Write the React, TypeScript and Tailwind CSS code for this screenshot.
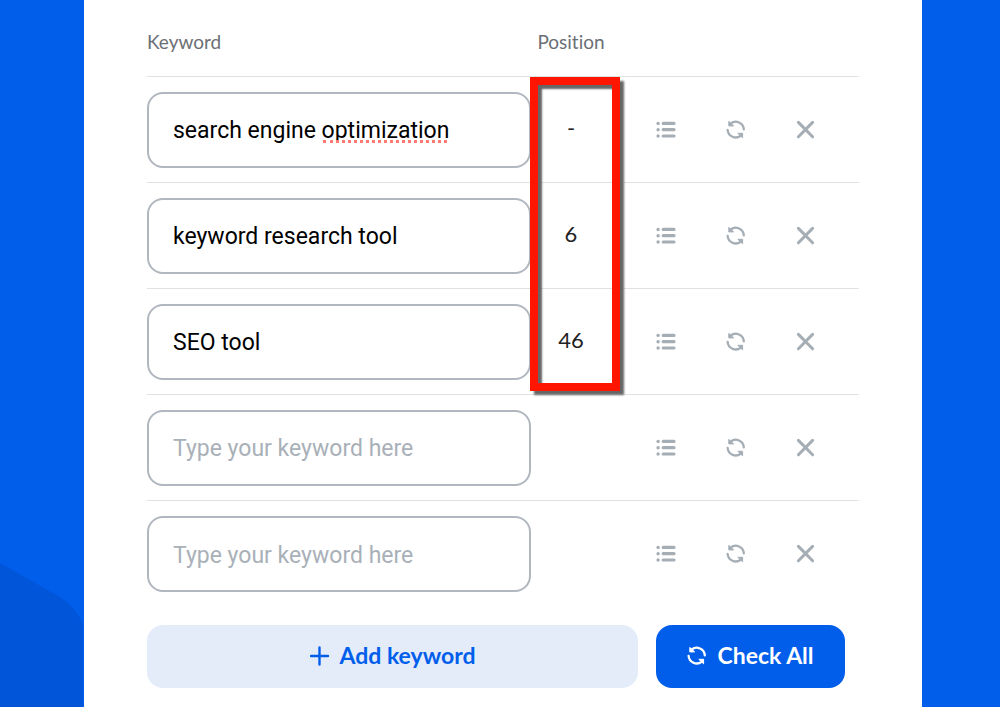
import React, { useState } from 'react';

interface KeywordRow {
  id: number;
  keyword: string;
  position: string;
  misspelled?: boolean;
}

const initialRows: KeywordRow[] = [
  { id: 1, keyword: 'search engine optimization', position: '-', misspelled: true },
  { id: 2, keyword: 'keyword research tool', position: '6' },
  { id: 3, keyword: 'SEO tool', position: '46' },
  { id: 4, keyword: '', position: '' },
  { id: 5, keyword: '', position: '' },
];

const ListIcon = () => (
  <svg className="h-5 w-5" viewBox="0 0 20 20" fill="none" aria-hidden="true">
    <g fill="currentColor">
      <circle cx="2.1" cy="3.4" r="1.7" />
      <circle cx="2.1" cy="9.7" r="1.7" />
      <circle cx="2.1" cy="16" r="1.7" />
    </g>
    <path d="M7.2 3.4H18M7.2 9.7H18M7.2 16H18" stroke="currentColor" strokeWidth="3.2" strokeLinecap="round" />
  </svg>
);

const RefreshIcon = () => (
  <svg className="h-5 w-5" viewBox="0 0 20 20" fill="none" aria-hidden="true">
    <path
      d="M17.8 9.4A8.1 8.1 0 0 0 4.6 3.6M1.6 9.8A8.1 8.1 0 0 0 14.8 15.6"
      stroke="currentColor"
      strokeWidth="2.3"
      strokeLinecap="round"
    />
    <path
      d="M2.8 1.4V5.9H7.6ZM16.6 17.8V13.3H11.8Z"
      fill="currentColor"
      stroke="currentColor"
      strokeWidth="1"
      strokeLinejoin="round"
    />
  </svg>
);

const CloseIcon = () => (
  <svg className="h-5 w-5" viewBox="0 0 20 20" fill="none" aria-hidden="true">
    <path d="M2.4 2.4L16.6 16.8M16.6 2.4L2.4 16.8" stroke="currentColor" strokeWidth="3" strokeLinecap="round" />
  </svg>
);

const PlusIcon = () => (
  <svg className="h-5 w-5" viewBox="0 0 20 20" fill="none" aria-hidden="true">
    <path d="M9.5 1.5V18.5M1 10H18" stroke="currentColor" strokeWidth="2.4" strokeLinecap="round" />
  </svg>
);

interface IconButtonProps {
  label: string;
  onClick?: () => void;
  children: React.ReactNode;
}

const IconButton: React.FC<IconButtonProps> = ({ label, onClick, children }) => (
  <button type="button" aria-label={label} onClick={onClick} className="flex h-10 w-[70px] items-center justify-center">
    {children}
  </button>
);

export default function App() {
  const [rows, setRows] = useState<KeywordRow[]>(initialRows);

  const updateKeyword = (id: number, keyword: string) => {
    setRows(rows.map(row => (row.id === id ? { ...row, keyword, misspelled: false } : row)));
  };

  const addRow = () => {
    setRows([...rows, { id: Date.now(), keyword: '', position: '' }]);
  };

  const removeRow = (id: number) => {
    setRows(rows.filter(row => row.id !== id));
  };

  return (
    <div className="flex min-h-screen bg-[#005eeb] font-['Lato','Open_Sans',sans-serif] [font-variant-ligatures:none]">
      {/* Left side with the darker blob */}
      <div className="flex w-[84px] shrink-0 flex-col justify-end">
        <svg className="block h-36 w-full" viewBox="0 0 84 144" preserveAspectRatio="none" aria-hidden="true">
          <path d="M0 0L58 33C70 40 79 50 83 63V144H0Z" fill="#0055d8" />
        </svg>
      </div>

      <main className="min-w-0 flex-1 bg-white px-[63px] pb-[19px]">
        <table className="w-full table-fixed border-separate border-spacing-0">
          <colgroup>
            <col />
            <col className="w-20" />
            <col className="w-[248px]" />
          </colgroup>
          <thead>
            <tr className="text-[19px] leading-6 text-[#6b6f76]">
              <th className="border-b border-[#dfe1e3] pt-[30px] pb-[22px] text-left font-normal">Keyword</th>
              <th className="border-b border-[#dfe1e3] pt-[30px] pb-[22px] text-center font-normal">Position</th>
              <th className="border-b border-[#dfe1e3]" aria-label="Actions" />
            </tr>
          </thead>
          <tbody className="[&>tr:not(:last-child)>td]:border-b">
            {rows.map((row, index) => (
              <tr key={row.id} className="h-[106px]">
                <td className="border-[#dfe1e3]">
                  <div className="relative">
                    <input
                      type="text"
                      aria-label={`Keyword ${index + 1}`}
                      value={row.keyword}
                      placeholder="Type your keyword here"
                      spellCheck={false}
                      onChange={e => updateKeyword(row.id, e.target.value)}
                      className="block h-[76px] w-full rounded-2xl border-2 border-[#b1b7be] bg-white px-6 pt-0.5 font-['Roboto','Liberation_Sans',sans-serif] text-[23px] text-black placeholder:text-[#a9b0b8]"
                    />
                    {row.misspelled && (
                      <span className="absolute top-12 left-44 w-[124px] border-b-3 border-dotted border-[#ff7a72]" />
                    )}
                  </div>
                </td>
                <td className="relative border-[#dfe1e3] pb-1 text-center text-[22px] text-[#222222]">
                  {row.position}
                  {index === 0 && (
                    <div className="pointer-events-none absolute top-0 -left-px z-10 h-[314px] w-[90px] border-8 border-[#ff1500] shadow-[4px_4px_2px_#666666,inset_4px_4px_2px_#666666]" />
                  )}
                </td>
                <td className="border-[#dfe1e3]">
                  <div className="flex pl-5 text-[#a5adb5]">
                    <IconButton label="Show results">
                      <ListIcon />
                    </IconButton>
                    <IconButton label="Refresh position">
                      <RefreshIcon />
                    </IconButton>
                    <IconButton label="Remove keyword" onClick={() => removeRow(row.id)}>
                      <CloseIcon />
                    </IconButton>
                  </div>
                </td>
              </tr>
            ))}
          </tbody>
        </table>

        <div className="mt-[18px] flex gap-[18px] pr-3.5 text-[23px] font-bold">
          <button
            type="button"
            onClick={addRow}
            className="flex h-[63px] flex-1 items-center justify-center gap-2.5 rounded-2xl bg-[#e4ecfa] pb-0.5 text-[#005eeb]"
          >
            <PlusIcon />
            Add keyword
          </button>
          <button
            type="button"
            className="flex h-[63px] w-[189px] items-center justify-center gap-2.5 rounded-2xl bg-[#005eeb] pb-0.5 text-white"
          >
            <RefreshIcon />
            Check All
          </button>
        </div>
      </main>

      <div className="w-[78px] shrink-0" />
    </div>
  );
}
